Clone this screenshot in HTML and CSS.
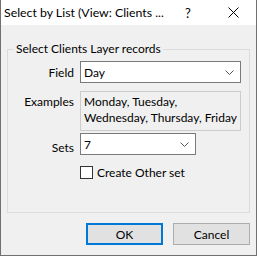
FILE: index.html
```html
<!DOCTYPE html>
<html lang="en">
<head>
<meta charset="UTF-8">
<meta name="viewport" content="width=device-width, initial-scale=1.0">
<title>Select by List</title>
<link rel="stylesheet" href="styles.css">
</head>
<body>

<div class="window">
  <!-- title bar -->
  <div class="titlebar">
    <span class="title">Select by List (View: Clients ...</span>
    <span class="help">?</span>
    <span class="close">
      <svg width="11" height="11" viewBox="0 0 11 11"><path d="M0.5 0.5 L10.5 10.5 M10.5 0.5 L0.5 10.5" stroke="#000" stroke-width="1" fill="none"/></svg>
    </span>
  </div>

  <div class="content">
    <fieldset class="group">
      <legend>Select Clients Layer records</legend>
      <div class="form">
        <label class="lbl">Field</label>
        <div class="combo wide">
          <span>Day</span>
          <svg class="arrow" width="9" height="5" viewBox="0 0 9 5"><path d="M0.5 0.5 L4.5 4.5 L8.5 0.5" stroke="#555" stroke-width="1" fill="none"/></svg>
        </div>

        <label class="lbl top">Examples</label>
        <div class="examples">Monday, Tuesday,<br>Wednesday, Thursday, Friday</div>

        <label class="lbl">Sets</label>
        <div class="combo narrow">
          <span>7</span>
          <svg class="arrow" width="9" height="5" viewBox="0 0 9 5"><path d="M0.5 0.5 L4.5 4.5 L8.5 0.5" stroke="#555" stroke-width="1" fill="none"/></svg>
        </div>

        <span></span>
        <div class="check">
          <span class="box"></span>
          <span>Create Other set</span>
        </div>
      </div>
    </fieldset>

    <div class="buttons">
      <button class="btn default">OK</button>
      <button class="btn">Cancel</button>
    </div>
  </div>
</div>

</body>
</html>
```

FILE: styles.css
```css
html, body {
  margin: 0;
  padding: 0;
}
body {
  font-family: 'Lato', 'Noto Sans', sans-serif;
  font-size: 12px;
  color: #000;
  background: #f0f0f0;
}
.window {
  width: 257px;
  height: 256px;
  box-sizing: border-box;
  border: 1px solid #707070;
  border-top: none;
  background: #f0f0f0;
  display: flex;
  flex-direction: column;
}
.titlebar {
  height: 25px;
  background: #fff;
  display: flex;
  align-items: center;
  padding-left: 3px;
}
.title {
  width: 181px;
  white-space: nowrap;
  overflow: hidden;
  font-size: 12.3px;
  line-height: 16px;
}
.help {
  width: 8px;
  font-size: 13px;
  margin-right: 35px;
}
.close {
  width: 11px;
  display: flex;
}
.content {
  flex: 1;
  padding: 17px 6px 0 6px;
  display: flex;
  flex-direction: column;
}
.group {
  margin: 0;
  border: 1px solid #dcdcdc;
  padding: 5px 7px 0 0;
  height: 171px;
  box-sizing: border-box;
}
.group legend {
  padding: 0 2px;
  margin-left: 6px;
  line-height: 14px;
}
.form {
  display: grid;
  grid-template-columns: 66px 1fr;
  column-gap: 6px;
  row-gap: 8px;
  align-items: center;
}
.lbl {
  text-align: right;
}
.lbl.top {
  align-self: start;
  padding-top: 3px;
}
.combo {
  height: 22px;
  box-sizing: border-box;
  border: 1px solid #7a7a7a;
  background: #fff;
  display: flex;
  align-items: center;
  justify-content: space-between;
  padding: 0 6px 0 3px;
}
.combo.wide {
  width: 161px;
}
.combo.narrow {
  width: 116px;
  margin-top: -6px;
}
.arrow {
  display: block;
}
.examples {
  width: 161px;
  height: 40px;
  box-sizing: border-box;
  border: 1px solid #cccccc;
  padding: 2px 3px;
  line-height: 16px;
  white-space: nowrap;
}
.check {
  display: flex;
  align-items: center;
  gap: 4px;
  height: 13px;
  margin-top: 3px;
}
.check .box {
  width: 13px;
  height: 13px;
  box-sizing: border-box;
  border: 1px solid #333;
  background: #fff;
}
.buttons {
  display: flex;
  justify-content: flex-end;
  gap: 10px;
  margin-top: 10px;
}
.btn {
  width: 77px;
  height: 22px;
  box-sizing: border-box;
  font-family: inherit;
  font-size: 12px;
  background: #e1e1e1;
  border: 1px solid #adadad;
  padding: 0;
  margin: 0;
}
.btn.default {
  border: 2px solid #0078d7;
}
```
